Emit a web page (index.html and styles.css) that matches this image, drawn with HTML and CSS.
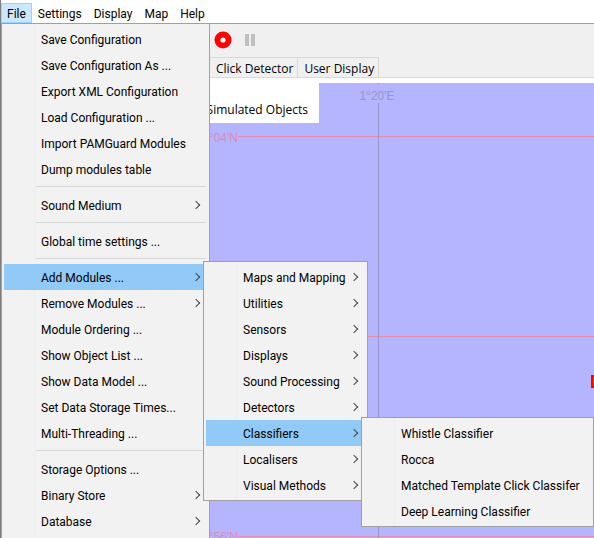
FILE: index.html
```html
<!DOCTYPE html>
<html lang="en">
<head>
<meta charset="utf-8">
<title>PAMGuard</title>
<link rel="stylesheet" href="styles.css">
</head>
<body>
<div class="app">
  <nav class="menubar">
    <button class="top open" type="button">File</button>
    <button class="top" type="button">Settings</button>
    <button class="top" type="button">Display</button>
    <button class="top" type="button">Map</button>
    <button class="top" type="button">Help</button>
    <ul class="menu file-menu">
      <li><button type="button">Save Configuration</button></li>
      <li><button type="button">Save Configuration As ...</button></li>
      <li><button type="button">Export XML Configuration</button></li>
      <li><button type="button">Load Configuration ...</button></li>
      <li><button type="button">Import PAMGuard Modules</button></li>
      <li><button type="button">Dump modules table</button></li>
      <li class="separator"></li>
      <li><button class="more" type="button">Sound Medium</button></li>
      <li class="separator"></li>
      <li><button type="button">Global time settings ...</button></li>
      <li class="separator"></li>
      <li>
        <button class="more selected" type="button">Add Modules ...</button>
        <ul class="menu submenu">
          <li><button class="more" type="button">Maps and Mapping</button></li>
          <li><button class="more" type="button">Utilities</button></li>
          <li><button class="more" type="button">Sensors</button></li>
          <li><button class="more" type="button">Displays</button></li>
          <li><button class="more" type="button">Sound Processing</button></li>
          <li><button class="more" type="button">Detectors</button></li>
          <li>
            <button class="more selected" type="button">Classifiers</button>
            <ul class="menu submenu classifier-menu">
              <li><button type="button">Whistle Classifier</button></li>
              <li><button type="button">Rocca</button></li>
              <li><button type="button">Matched Template Click Classifer</button></li>
              <li><button type="button">Deep Learning Classifier</button></li>
            </ul>
          </li>
          <li><button class="more" type="button">Localisers</button></li>
          <li><button class="more" type="button">Visual Methods</button></li>
        </ul>
      </li>
      <li><button class="more" type="button">Remove Modules ...</button></li>
      <li><button type="button">Module Ordering ...</button></li>
      <li><button type="button">Show Object List ...</button></li>
      <li><button type="button">Show Data Model ...</button></li>
      <li><button type="button">Set Data Storage Times...</button></li>
      <li><button type="button">Multi-Threading ...</button></li>
      <li class="separator"></li>
      <li><button type="button">Storage Options ...</button></li>
      <li><button class="more" type="button">Binary Store</button></li>
      <li><button class="more" type="button">Database</button></li>
      <li class="separator"></li>
    </ul>
  </nav>
  <div class="toolbar">
    <button class="tool" type="button" aria-label="Record">
      <svg width="18" height="18" viewBox="0 0 18 18"><circle cx="9" cy="9" r="8.5" fill="#f00"/><circle cx="9" cy="9" r="2.6" fill="#fff"/></svg>
    </button>
    <button class="tool" type="button" aria-label="Pause">
      <svg width="10" height="12" viewBox="0 0 10 12"><path d="M0 0h4v12H0zM6 0h4v12H6z" fill="#c0c0c0"/></svg>
    </button>
  </div>
  <div class="tabs">
    <button class="tab" type="button">Click Detector</button>
    <button class="tab" type="button">User Display</button>
  </div>
  <main class="map">
    <svg class="grid" width="100%" height="100%">
      <g class="parallel">
        <line x1="237" x2="100%" y1="53.5" y2="53.5"/>
        <line x1="237" x2="100%" y1="253.5" y2="253.5"/>
        <line x1="237" x2="100%" y1="453.5" y2="453.5"/>
        <text x="237" y="59">°04'N</text>
        <text x="237" y="458">°56'N</text>
      </g>
      <g class="meridian">
        <line x1="377.5" x2="377.5" y1="0" y2="1"/>
        <line x1="377.5" x2="377.5" y1="20" y2="100%"/>
        <text x="376" y="17">1°20'E</text>
      </g>
      <rect x="591" y="293" width="10" height="11" fill="#f00"/>
      <rect x="592" y="294" width="8" height="9" fill="#8a6a00"/>
      <rect x="591" y="293" width="8" height="11" fill="none" stroke="#f00" stroke-width="2"/>
    </svg>
    <div class="legend">Simulated Objects</div>
  </main>
</div>
</body>
</html>
```
FILE: styles.css
```css
* { box-sizing: border-box; }

body {
  margin: 0;
  font-family: "Open Sans", "Noto Sans", sans-serif;
  font-size: 12px;
  color: #000;
}

button {
  margin: 0;
  border: 0;
  padding: 0;
  background: none;
  font: inherit;
  color: inherit;
  text-align: left;
  white-space: nowrap;
}

.app {
  display: flex;
  flex-direction: column;
  height: 100vh;
  overflow: hidden;
  border-left: 1px solid #808080;
  background: #fff;
}

.menubar {
  position: relative;
  z-index: 1;
  display: flex;
  flex: none;
  height: 24px;
  padding-top: 3px;
  border-bottom: 1px solid #a0a0a0;
  font-family: Roboto, "Open Sans", sans-serif;
}

.top {
  height: 20px;
  padding: 0 5px;
  border: 1px solid transparent;
  line-height: 20px;
}

.top.open {
  border-color: #99d1ff;
  background: #cce8ff;
}

.menu {
  position: absolute;
  margin: 0;
  padding: 2px;
  border: 1px solid #a0a0a0;
  background: linear-gradient(90deg, transparent 32px, #ededed 32px, #ededed 33px, transparent 33px) #f2f2f2;
  list-style: none;
}

.file-menu {
  top: 23px;
  left: 0;
  width: 209px;
}

.menu li { position: relative; }

.menu button {
  position: relative;
  display: block;
  width: 100%;
  height: 26px;
  padding-left: 37px;
  line-height: 28px;
}

.menu .selected { background: #91c9f7; }

.more::after {
  content: "";
  position: absolute;
  top: 10px;
  right: 8px;
  width: 5px;
  height: 5px;
  border: solid #444;
  border-width: 1px 1px 0 0;
  transform: rotate(45deg);
}

.separator {
  height: 10px;
  margin: 0 1px 0 32px;
  background: linear-gradient(#d7d7d7, #d7d7d7) 0 4px / 100% 1px no-repeat;
}

.submenu {
  top: -3px;
  left: calc(100% - 4px);
  z-index: 1;
  width: 165px;
}

.classifier-menu { width: 233px; }

.toolbar {
  display: flex;
  flex: none;
  align-items: center;
  gap: 13px;
  height: 33px;
  padding: 0 0 2px 213px;
  background: #f0f0f0;
}

.tool { display: flex; }

.tabs {
  display: flex;
  flex: none;
  height: 21px;
  padding-left: 209px;
  border-bottom: 1px solid #d9d9d9;
  background: #f0f0f0;
}

.tab {
  padding: 0 4px 0 6px;
  border: solid #d9d9d9;
  border-width: 1px 1px 0 0;
  line-height: 22px;
}

.map {
  position: relative;
  flex: 1;
  min-height: 0;
  margin-top: 5px;
  background: #b4b4ff;
}

.grid {
  display: block;
  font-family: "Liberation Sans", sans-serif;
}

.grid text { font-size: 12px; }
.parallel line { stroke: #e48bad; }
.parallel text { fill: #dc8cb9; text-anchor: end; }
.meridian line { stroke: #9696c8; }
.meridian text { fill: #9696c8; text-anchor: middle; }

.legend {
  position: absolute;
  top: 0;
  left: 0;
  width: 318px;
  padding: 17px 11px 3px;
  background: #fff;
  line-height: 20px;
  text-align: right;
}
```
